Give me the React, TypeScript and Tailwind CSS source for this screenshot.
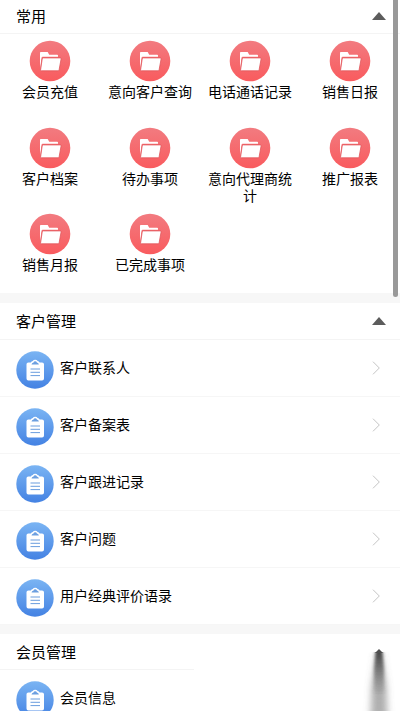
import { useState } from "react";

const SHORTCUTS = [
  "会员充值",
  "意向客户查询",
  "电话通话记录",
  "销售日报",
  "客户档案",
  "待办事项",
  "意向代理商统计",
  "推广报表",
  "销售月报",
  "已完成事项",
];

const CUSTOMER_ITEMS = [
  "客户联系人",
  "客户备案表",
  "客户跟进记录",
  "客户问题",
  "用户经典评价语录",
];

const MEMBER_ITEMS = ["会员信息"];

function FolderIcon() {
  return (
    <svg viewBox="0 0 42 42" className="block h-[42px] w-[42px]">
      <defs>
        <linearGradient id="folder-bg" x1="0" y1="0" x2="0" y2="1">
          <stop offset="0" stopColor="#f27b80" />
          <stop offset="1" stopColor="#f95b5e" />
        </linearGradient>
      </defs>
      <circle cx="21" cy="21" r="20.3" fill="url(#folder-bg)" />
      <path
        d="M11 29V12.700q0-.8.8-.8h6.900l1.500 2.800h8q.8 0 .8.8v1.200H13.600q-.8 0-1 .9z"
        fill="#fff"
      />
      <path
        d="M14.300 17.900h17q1 0 .8 1l-2 11q-.2.9-1.100.9H12.300q-.9 0-.7-.9l1.600-11q.2-1 1.100-1z"
        fill="#fff"
        stroke="#e0555a"
        strokeWidth="0.8"
      />
    </svg>
  );
}

function ClipboardIcon() {
  return (
    <svg viewBox="0 0 38 38" className="block h-[38px] w-[38px] shrink-0">
      <defs>
        <linearGradient id="clipboard-bg" x1="0" y1="0" x2="0" y2="1">
          <stop offset="0" stopColor="#7ab4f3" />
          <stop offset="1" stopColor="#4482e3" />
        </linearGradient>
      </defs>
      <circle cx="19" cy="19" r="18.7" fill="url(#clipboard-bg)" />
      <path
        d="M12.400 11.400h2.400q.6-1 2-1.300.7-1.300 2.400-1.300t2.400 1.300q1.400.3 2 1.300H26q2 0 2 1.900v14.200q0 1.900-2 1.900H12.400q-1.900 0-1.900-1.900V13.300q0-1.900 1.900-1.900z"
        fill="#fff"
      />
      <path
        d="M15.500 13.600q.2-2 2-2.200.4-1.100 1.700-1.100t1.700 1.100q1.800.2 2 2.200z"
        fill="#6c9fe0"
      />
      <path
        d="M14.500 18h9.500M14.500 21.300h9.500M14.500 24.600h9.500"
        stroke="#6a9dde"
        strokeWidth="1"
      />
    </svg>
  );
}

function ChevronIcon() {
  return (
    <svg
      viewBox="0 0 8 14"
      className="block h-3.5 w-2"
      fill="none"
      stroke="#b5b5b5"
      strokeWidth="0.8"
    >
      <path d="M1 .7 7.300 7 1 13.300" />
    </svg>
  );
}

// Dark streak that fades out downwards over the last section's arrow
function Smear() {
  return (
    <div className="absolute right-0 top-[13px] flex h-16 w-[206px] justify-end bg-white">
      <svg viewBox="0 0 44 64" className="h-16 w-11">
        <defs>
          <linearGradient id="smear-core" x1="0" y1="0" x2="0" y2="1">
            <stop offset="0" stopColor="#444" />
            <stop offset="0.25" stopColor="#444" stopOpacity="0.7" />
            <stop offset="0.75" stopColor="#444" stopOpacity="0" />
          </linearGradient>
          <linearGradient id="smear-halo" x1="0" y1="0" x2="0" y2="1">
            <stop offset="0" stopColor="#666" stopOpacity="0.3" />
            <stop offset="0.5" stopColor="#666" stopOpacity="0.55" />
            <stop offset="1" stopColor="#777" stopOpacity="0.55" />
          </linearGradient>
          <filter id="blur-core" x="-50%" y="-10%" width="200%" height="130%">
            <feGaussianBlur stdDeviation="1.5 0.4" />
          </filter>
          <filter id="blur-halo" x="-100%" y="-10%" width="300%" height="120%">
            <feGaussianBlur stdDeviation="3.5 1" />
          </filter>
        </defs>
        <path
          d="M20 6h6l4 30 2 44H14l2-44z"
          fill="url(#smear-halo)"
          filter="url(#blur-halo)"
        />
        <path
          d="M19.500 5h7l1.500 17 1 40H17l1-40z"
          fill="url(#smear-core)"
          filter="url(#blur-core)"
        />
        <path d="M19 6 23 2l4 4z" fill="#505050" />
      </svg>
    </div>
  );
}

interface SectionProps {
  title: string;
  headerClass?: string;
  children: React.ReactNode;
  smear?: boolean;
}

function Section({ title, headerClass = "h-9", children, smear }: SectionProps) {
  const [open, setOpen] = useState(true);

  return (
    <section className="relative">
      <button
        onClick={() => setOpen(!open)}
        className={`flex w-full items-center justify-between border-b border-[#f4f4f4] pl-4 pr-3.5 text-[15px] ${headerClass}`}
      >
        <span>{title}</span>
        <svg viewBox="0 0 14 8" className={`h-2 w-3.5 ${open ? "" : "rotate-180"}`}>
          <path d="M0 8 7 0l7 8z" fill="#5c5c5c" />
        </svg>
      </button>
      {open && children}
      {smear && <Smear />}
    </section>
  );
}

function ItemList({ items }: { items: string[] }) {
  return (
    <ul>
      {items.map((item) => (
        <li
          key={item}
          className="flex h-[57px] items-center border-b border-[#f6f6f6] pl-4 pr-5 pt-1"
        >
          <ClipboardIcon />
          <span className="-mt-1.5 ml-1.5 flex-1">{item}</span>
          <span className="-mt-1">
            <ChevronIcon />
          </span>
        </li>
      ))}
    </ul>
  );
}

export default function App() {
  return (
    <div className="relative h-[711px] w-[400px] overflow-hidden bg-white font-['Noto_Sans_CJK_SC',sans-serif] text-sm text-black">
      <Section title="常用" headerClass="h-[34px] pb-0.5">
        <div className="grid h-[259px] auto-rows-[86.5px] grid-cols-4 pt-1.5">
          {SHORTCUTS.map((name) => (
            <div key={name} className="flex flex-col items-center px-2">
              <FolderIcon />
              <span className="mt-px w-[84px] text-center leading-[17px]">
                {name}
              </span>
            </div>
          ))}
        </div>
      </Section>

      <div className="h-2.5 bg-[#f7f7f7]" />
      <Section title="客户管理" headerClass="h-[37px]">
        <ItemList items={CUSTOMER_ITEMS} />
      </Section>

      <div className="h-[9px] bg-[#f7f7f7]" />
      <Section title="会员管理" smear>
        <ItemList items={MEMBER_ITEMS} />
      </Section>

      <div className="absolute right-0.5 top-0 h-[297px] w-[5px] rounded-b-full bg-[#999]" />
    </div>
  );
}
